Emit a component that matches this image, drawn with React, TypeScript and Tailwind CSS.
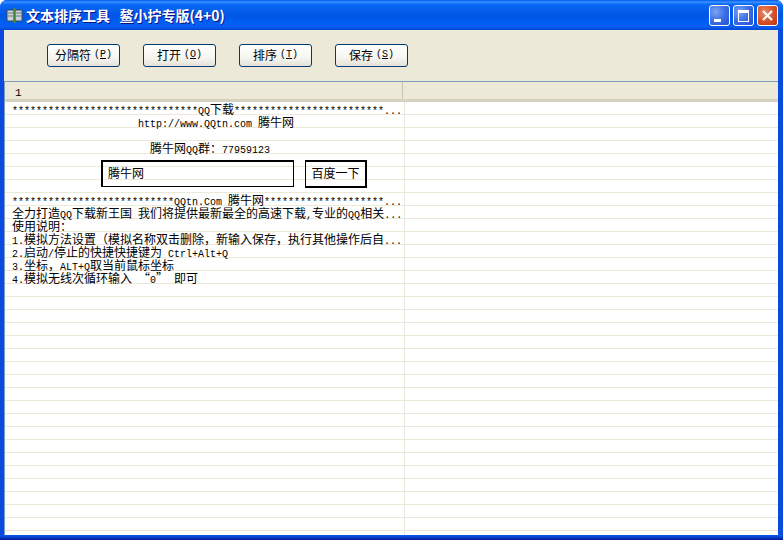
const cjk = '"Noto Sans CJK SC", sans-serif';

// ASCII is 6px wide and CJK 12px wide in the original font, so runs get separate sizes
function Mixed({ text }: { text: string }) {
  const parts = text.split(/([\x20-\x7e]+)/).filter(Boolean);
  return (
    <>
      {parts.map((part, i) =>
        /^[\x20-\x7e]+$/.test(part) ? (
          <span key={i} className="block shrink-0 whitespace-pre font-['Liberation_Mono',monospace] text-[10px] leading-[12px]">
            {part}
          </span>
        ) : (
          <span key={i} className="block shrink-0 whitespace-pre font-['Noto_Sans_CJK_SC',sans-serif] text-[12px] leading-[12px]">
            {part}
          </span>
        ),
      )}
    </>
  );
}

const stars = (n: number) => "*".repeat(n);

const lines: { text: string; pad: string }[] = [
  { text: stars(31) + "QQ下载" + stars(25) + "...", pad: "pl-[7px]" },
  { text: "http://www.QQtn.com 腾牛网", pad: "pl-[133px]" },
  { text: "", pad: "" },
  { text: "腾牛网QQ群：77959123", pad: "pl-[145px]" },
  { text: "", pad: "" },
  { text: "", pad: "" },
  { text: "", pad: "" },
  { text: stars(27) + "QQtn.Com 腾牛网" + stars(20) + "...", pad: "pl-[7px]" },
  { text: "全力打造QQ下载新王国 我们将提供最新最全的高速下载,专业的QQ相关...", pad: "pl-[7px]" },
  { text: "使用说明：", pad: "pl-[7px]" },
  { text: "1.模拟方法设置（模拟名称双击删除，新输入保存，执行其他操作后自...", pad: "pl-[7px]" },
  { text: "2.启动/停止的快捷快捷键为 Ctrl+Alt+Q", pad: "pl-[7px]" },
  { text: "3.坐标，ALT+Q取当前鼠标坐标", pad: "pl-[7px]" },
  { text: "4.模拟无线次循环输入 “0” 即可", pad: "pl-[7px]" },
];

const rows = Array.from({ length: 34 }, (_, i) => lines[i] ?? { text: "", pad: "" });

function ToolButton({ label, hot }: { label: string; hot: string }) {
  return (
    <button className="flex h-[23px] w-[73px] items-center justify-center rounded-[3px] border border-[#003c74] bg-[linear-gradient(180deg,#ffffff_0%,#f6f5f0_60%,#e4e2d8_100%)] pb-[2px] text-[12px] leading-none text-black">
      <span className="whitespace-pre" style={{ fontFamily: cjk }}>
        {label}
      </span>
      <span className="ml-[3px] font-['Liberation_Mono',monospace] text-[10px]">
        (<span className="underline">{hot}</span>)
      </span>
    </button>
  );
}

function CaptionButton({ red, children }: { red?: boolean; children: React.ReactNode }) {
  return (
    <div
      className={
        red
          ? "flex h-[21px] w-[21px] items-center justify-center rounded-[3px] border border-white bg-[radial-gradient(circle_at_35%_35%,#e8906f_0%,#d9542b_50%,#b5330f_100%)]"
          : "flex h-[21px] w-[21px] items-center justify-center rounded-[3px] border border-white bg-[radial-gradient(circle_at_30%_30%,#7ea4f5_0%,#3c6fe6_50%,#1f4fd0_100%)]"
      }
    >
      {children}
    </div>
  );
}

export default function App() {
  return (
    <div className="flex h-[540px] w-[783px] flex-col overflow-hidden rounded-t-[7px] bg-[#0a4ae0]">
      {/* title bar */}
      <div className="flex h-[30px] shrink-0 items-center bg-[linear-gradient(180deg,#0058ee_0%,#3a93ff_7%,#0a6af5_14%,#0055e5_50%,#0060f5_80%,#0a5cf0_90%,#0046d5_100%)] pl-[6px] pr-[5px]">
        <svg width="17" height="15" viewBox="0 0 17 15" className="shrink-0">
          <path d="M1 2h7v11H1z" fill="#c8d4d8" stroke="#3a4a50" strokeWidth="1" />
          <path d="M9 2h7v11H9z" fill="#c8d4d8" stroke="#3a4a50" strokeWidth="1" />
          <path d="M2 5h5M2 8h5M10 5h5M10 8h5" stroke="#6a7a80" strokeWidth="1" />
          <path d="M8.5 0v15" stroke="#4a8a3a" strokeWidth="2" />
        </svg>
        <span
          className="ml-[3px] whitespace-pre text-[14px] font-bold leading-none text-white [text-shadow:1px_1px_#0f1089]"
          style={{ fontFamily: cjk }}
        >
          文本排序工具   鳌小拧专版(4+0)
        </span>
        <div className="ml-auto flex gap-[3px]">
          <CaptionButton>
            <svg width="19" height="19" viewBox="0 0 19 19">
              <rect x="4" y="13" width="7" height="3" fill="#fff" />
            </svg>
          </CaptionButton>
          <CaptionButton>
            <svg width="19" height="19" viewBox="0 0 19 19">
              <rect x="4.5" y="5.5" width="10" height="10" fill="none" stroke="#fff" />
              <rect x="4" y="4" width="11" height="3" fill="#fff" />
            </svg>
          </CaptionButton>
          <CaptionButton red>
            <svg width="19" height="19" viewBox="0 0 19 19">
              <path d="M5 5l9 9M14 5l-9 9" stroke="#fff" strokeWidth="2.2" />
            </svg>
          </CaptionButton>
        </div>
      </div>

      {/* client area */}
      <div className="ml-[4px] mr-[5px] flex min-h-0 flex-1 flex-col bg-[#ece9d8]">
        {/* toolbar */}
        <div className="flex h-[51px] shrink-0 gap-[23px] pl-[43px] pt-[14px]">
          <ToolButton label="分隔符" hot="P" />
          <ToolButton label="打开" hot="O" />
          <ToolButton label="排序" hot="T" />
          <ToolButton label="保存" hot="S" />
        </div>

        {/* list */}
        <div className="relative flex min-h-0 flex-1 flex-col border-l border-t border-[#7f9db9] bg-white">
          <div className="flex h-[20px] shrink-0 border-b-[3px] border-[#d6d2c2] bg-[#ece9d8] text-black">
            <div className="w-[398px] border-r border-[#c9c5b4] pl-[10px] font-['Liberation_Mono',monospace] text-[11px] leading-[22px]">
              1
            </div>
          </div>
          <div className="min-h-0 flex-1 overflow-hidden">
            {rows.map((row, i) => (
              <div key={i} className="flex h-[13px] border-b border-[#ece9d8]">
                <div className={`flex h-[12px] w-[400px] shrink-0 items-baseline border-r border-[#ece9d8] pt-[1px] text-black ${row.pad}`}>
                  <Mixed text={row.text} />
                </div>
              </div>
            ))}
          </div>

          {/* embedded web form over the rows */}
          <div className="absolute left-[96px] top-[78px] flex gap-[11px]">
            <div className="flex h-[27px] w-[193px] items-center border-b border-l-2 border-r border-t-2 border-black pb-[2px] pl-[5px] text-[12px] text-black" style={{ fontFamily: cjk }}>
              腾牛网
            </div>
            <div className="flex h-[28px] w-[62px] items-center justify-center border-b-2 border-l border-r-2 border-t-2 border-black pb-[2px] text-[12px] text-black" style={{ fontFamily: cjk }}>
              百度一下
            </div>
          </div>
        </div>
      </div>

      {/* bottom frame */}
      <div className="h-[5px] shrink-0 bg-[linear-gradient(180deg,#0a5cf0_0%,#0a3cc8_50%,#001a90_100%)]" />
    </div>
  );
}
